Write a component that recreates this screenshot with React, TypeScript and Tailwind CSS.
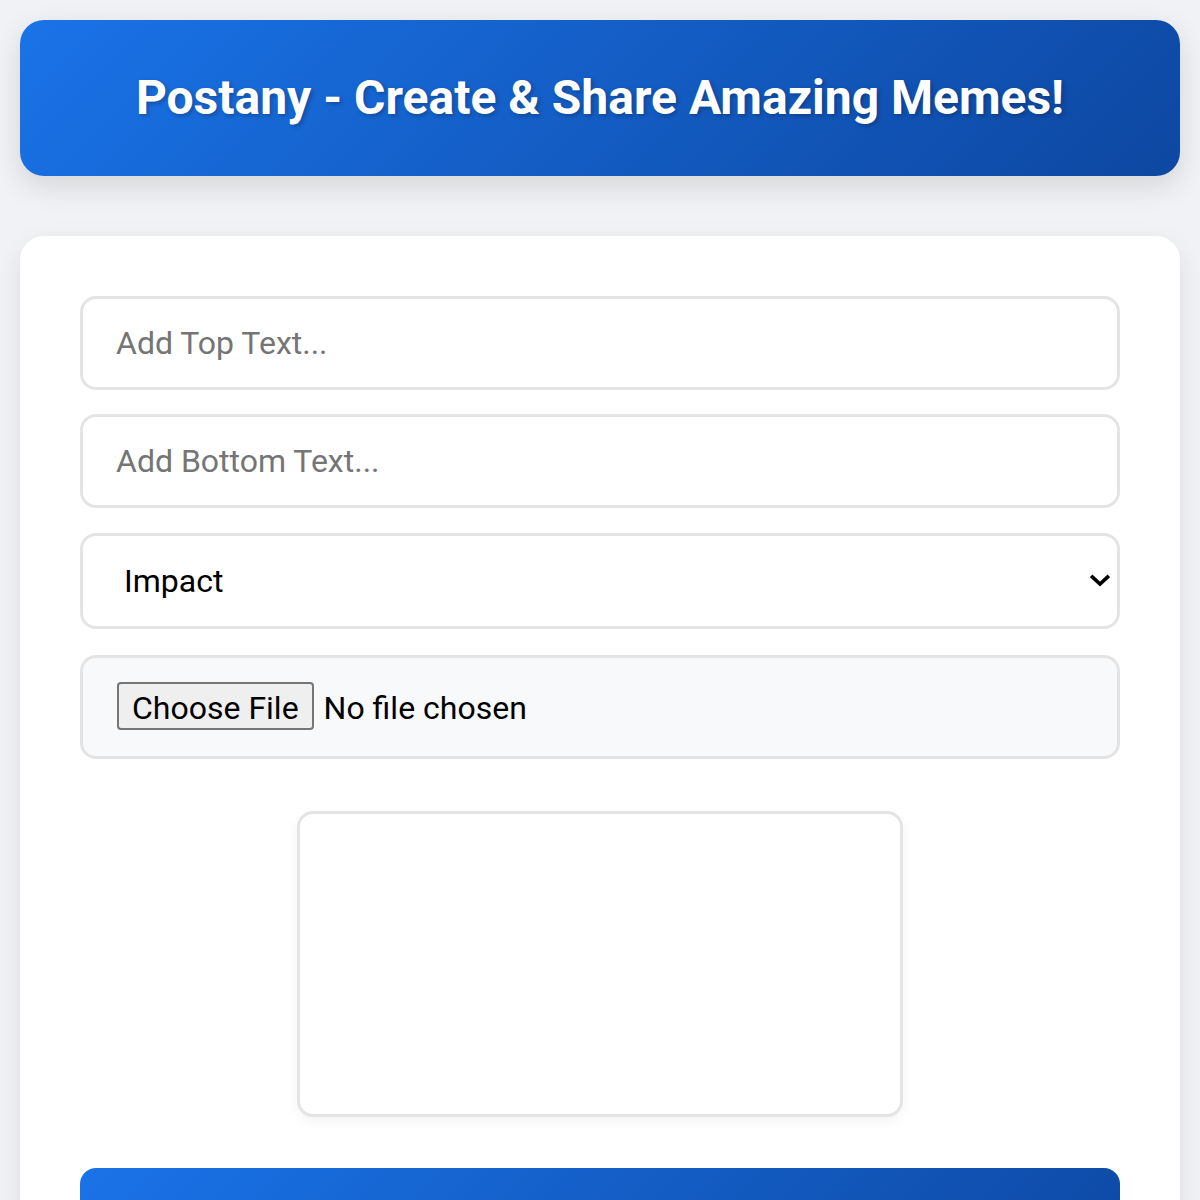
import React from "react";

export default function App() {
  return (
    <div className="min-h-screen bg-[#f0f2f5] p-[20px] font-['Roboto',sans-serif]">
      <header className="h-[156px] rounded-[24px] bg-[linear-gradient(135deg,#1a73e8,#0d47a1)] shadow-[0_10px_30px_rgba(0,0,0,0.12)] flex items-center justify-center">
        <h1 className="text-white font-bold text-[48px] leading-none [text-shadow:2px_2px_4px_rgba(0,0,0,0.25)]">
          Postany - Create &amp; Share Amazing Memes!
        </h1>
      </header>

      <main className="mt-[60px] rounded-[24px] bg-white p-[60px] shadow-[0_10px_30px_rgba(0,0,0,0.08)]">
        <input
          type="text"
          placeholder="Add Top Text..."
          className="block w-full h-[94px] rounded-[16px] border-[3px] border-[#e4e4e4] bg-white px-[33px] text-[32px] text-[#222] placeholder:text-[#757575] outline-none"
        />
        <input
          type="text"
          placeholder="Add Bottom Text..."
          className="mt-[24px] block w-full h-[94px] rounded-[16px] border-[3px] border-[#e4e4e4] bg-white px-[33px] text-[32px] text-[#222] placeholder:text-[#757575] outline-none"
        />
        <div className="relative mt-[25px]">
          <select
            defaultValue="Impact"
            className="block w-full h-[96px] appearance-none rounded-[16px] border-[3px] border-[#e4e4e4] bg-white pl-[41px] pr-[60px] text-[32px] text-black outline-none"
          >
            <option>Impact</option>
            <option>Arial</option>
            <option>Comic Sans MS</option>
          </select>
          <svg
            className="pointer-events-none absolute right-[10px] top-1/2 -translate-y-1/2"
            width="20"
            height="14"
            viewBox="0 0 20 14"
          >
            <path d="M2.5 3 L10 10 L17.5 3" fill="none" stroke="#000" strokeWidth="3.6" strokeLinecap="square" />
          </svg>
        </div>
        <div className="mt-[26px] flex h-[104px] items-center rounded-[16px] border-[3px] border-[#e4e4e4] bg-[#f8f9fa] px-[34px]">
          <input
            type="file"
            className="text-[32px] text-black file:mr-[10px] file:h-[48px] file:rounded-[4px] file:border-2 file:border-solid file:border-[#767676] file:bg-[#efefef] file:px-[13px] file:text-[32px] file:text-black file:font-['Roboto',sans-serif]"
          />
        </div>
        <div className="mt-[52px] flex justify-center">
          <canvas
            width={300}
            height={150}
            className="block w-[606px] h-[306px] rounded-[16px] border-[3px] border-[#e4e4e4] bg-white shadow-[0_4px_12px_rgba(0,0,0,0.05)]"
          />
        </div>
        <button className="mt-[51px] block w-full rounded-[16px] bg-[linear-gradient(135deg,#1a73e8,#0d47a1)] pt-[64px] pb-[30px] text-[32px] font-bold text-white">
          Download Meme
        </button>
      </main>
    </div>
  );
}
